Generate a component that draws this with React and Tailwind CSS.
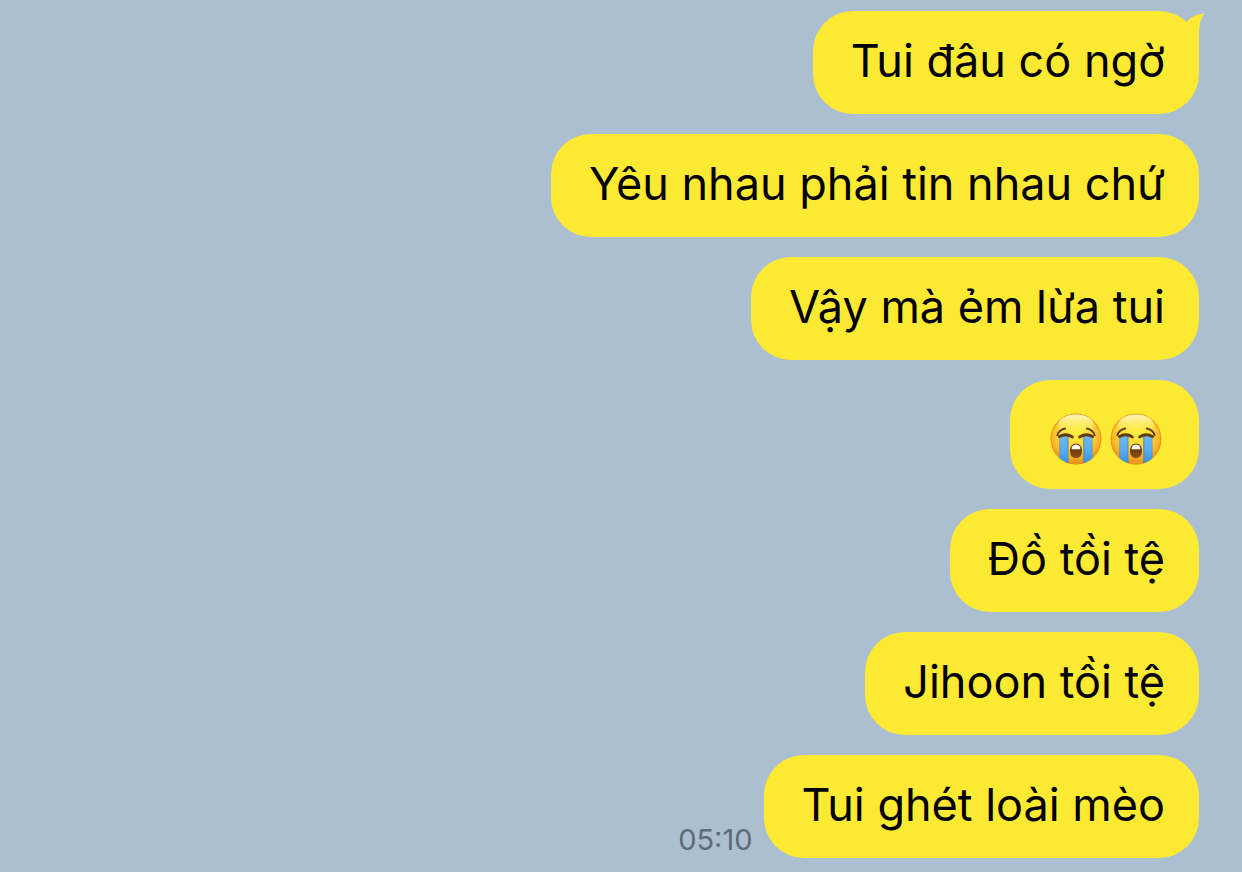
function CryingFace() {
  return (
    <svg viewBox="0 0 52 52" className="size-[52px]" role="img" aria-label="Loudly crying face">
      <defs>
        <radialGradient id="skin" cx="50%" cy="36%" r="64%">
          <stop offset="0" stopColor="#ffee3c" />
          <stop offset="0.5" stopColor="#ffd938" />
          <stop offset="0.78" stopColor="#fbb22b" />
          <stop offset="1" stopColor="#e98a14" />
        </radialGradient>
        <linearGradient id="shine" x1="0" y1="0" x2="0" y2="1">
          <stop offset="0" stopColor="#fffbd0" stopOpacity="0.9" />
          <stop offset="1" stopColor="#fff35a" stopOpacity="0" />
        </linearGradient>
        <linearGradient id="tear" x1="0" y1="0" x2="0" y2="1">
          <stop offset="0" stopColor="#6fb9f2" />
          <stop offset="0.5" stopColor="#58acef" />
          <stop offset="1" stopColor="#2f8de0" />
        </linearGradient>
        <linearGradient id="mouth" x1="0" y1="0" x2="0" y2="1">
          <stop offset="0" stopColor="#5f2f0b" />
          <stop offset="1" stopColor="#8c4f14" />
        </linearGradient>
        <clipPath id="face">
          <circle cx="26" cy="26" r="25.4" />
        </clipPath>
      </defs>
      <circle cx="26" cy="26" r="25.4" fill="url(#skin)" />
      <circle cx="26" cy="26" r="24.8" fill="none" stroke="#e5941c" strokeOpacity="0.75" strokeWidth="1.2" />
      <ellipse cx="26" cy="12" rx="18" ry="10.5" fill="url(#shine)" />
      <g clipPath="url(#face)">
        <path d="M9.6 22.500h8.400v30H9.600z" fill="url(#tear)" />
        <path d="M33.800 22.500h8.400v30h-8.400z" fill="url(#tear)" />
        <path d="M18 23v30M33.800 23v30" stroke="#3f83bb" strokeWidth="0.9" />
        <path d="M9.6 23v30M42.200 23v30" stroke="#3f83bb" strokeOpacity="0.6" strokeWidth="0.7" />
      </g>
      <g fill="none" stroke="#643a0b" strokeLinecap="round">
        <path d="M7.200 22.200c1.300-3.400 4-5.900 8-6.700" strokeWidth="1.8" />
        <path d="M44.800 22.200c-1.300-3.400-4-5.900-8-6.700" strokeWidth="1.8" />
        <path d="M9.400 23.600c4-2.300 9-2.200 13 .4" strokeWidth="2.900" />
        <path d="M42.600 23.600c-4-2.300-9-2.200-13 .4" strokeWidth="2.900" />
      </g>
      <path d="M20 38c0-4.500 2.600-7.400 6-7.400s6 2.900 6 7.400c0 4.600-2.200 7-6 7s-6-2.400-6-7z" fill="url(#mouth)" />
      <path d="M21.700 34.500c.7-1.900 2.300-3 4.300-3s3.600 1.100 4.300 3c.4 1.100-.1 1.800-1.100 1.800h-6.400c-1 0-1.500-.7-1.100-1.800z" fill="#fff" />
    </svg>
  );
}

function Tail() {
  return (
    <svg viewBox="0 0 46 50" className="absolute top-0 -right-[6px] h-[50px] w-[46px]" aria-hidden="true">
      <path d="M27.500 10.800C32 6 38 2.900 45.500 2.600C42 7 40.200 13 40 21V50H20V20Z" fill="#ffea33" />
    </svg>
  );
}

const messages = [
  { text: "Tui đâu có ngờ", tail: true },
  { text: "Yêu nhau phải tin nhau chứ" },
  { text: "Vậy mà ẻm lừa tui" },
  { faces: 2 },
  { text: "Đồ tồi tệ" },
  { text: "Jihoon tồi tệ" },
  { text: "Tui ghét loài mèo", time: "05:10" },
];

function Message({ text, faces, tail, time }) {
  return (
    <li className="flex items-end justify-end gap-[11px]">
      {time && <time className="text-[29px] leading-[36px] text-[#5f6b78]">{time}</time>}
      {faces ? (
        <div className="flex h-[109px] items-center gap-2 rounded-[40px] bg-[#ffea33] pt-2 pr-[37px] pl-[40px]">
          {Array.from({ length: faces }, (_, i) => (
            <CryingFace key={i} />
          ))}
        </div>
      ) : (
        <div className="relative rounded-[40px] bg-[#ffea33]">
          {tail && <Tail />}
          <p className="relative pt-[23px] pr-[34px] pb-[26px] pl-[38px] leading-[54px]">{text}</p>
        </div>
      )}
    </li>
  );
}

export default function App() {
  return (
    <main className="min-h-screen bg-[#abbfd1] pt-[11px] pr-[43px] pb-[14px] font-['Inter','Noto_Sans',sans-serif] text-[45px] font-[380] text-black">
      <ul className="flex flex-col gap-[20px]">
        {messages.map((message, i) => (
          <Message key={i} {...message} />
        ))}
      </ul>
    </main>
  );
}
